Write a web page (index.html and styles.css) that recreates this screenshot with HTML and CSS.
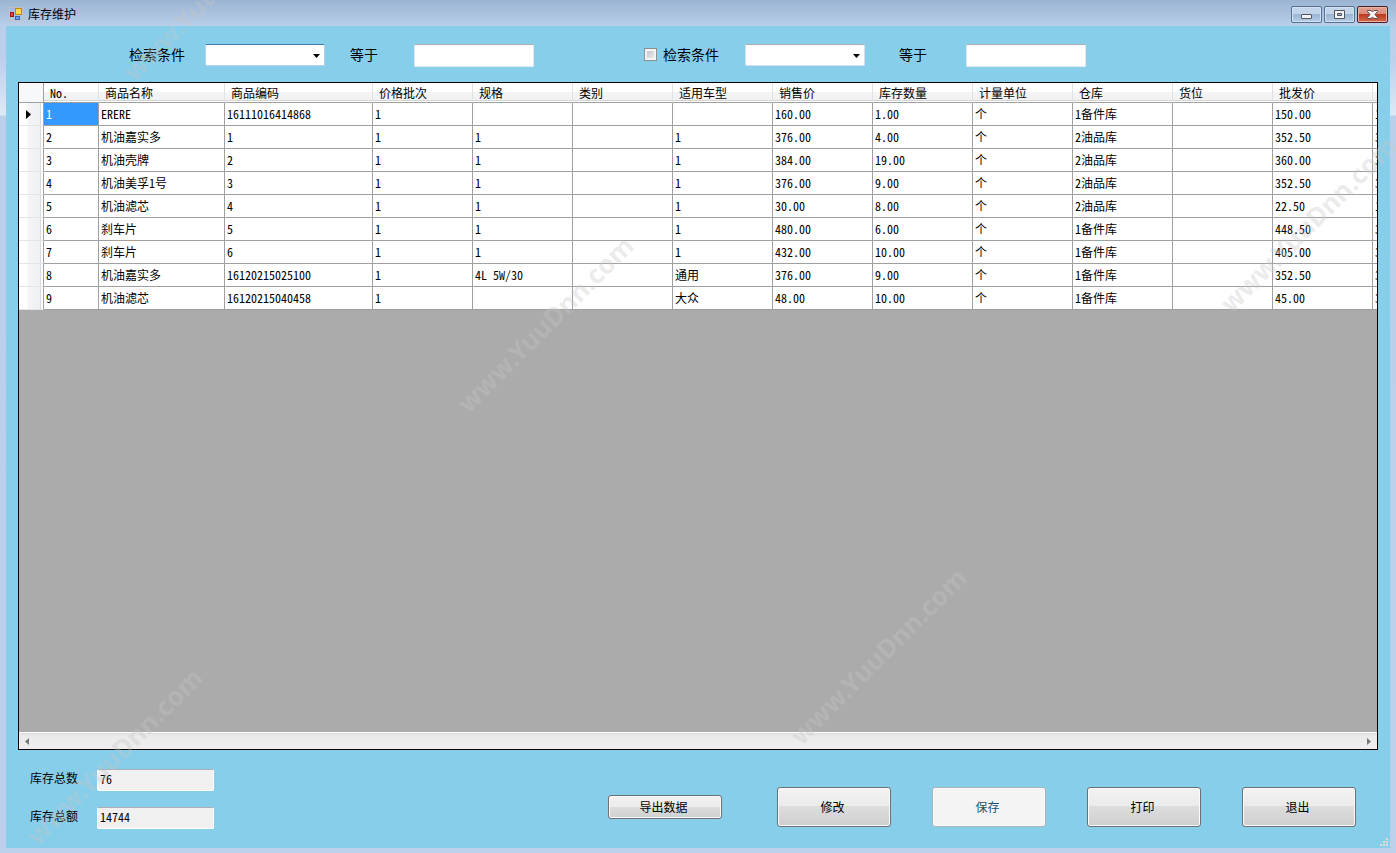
FILE: index.html
```html
<!DOCTYPE html>
<html lang="zh-CN">
<head>
<meta charset="utf-8">
<title>库存维护</title>
<link rel="stylesheet" href="styles.css">
</head>
<body>
<div class="window">
  <header class="titlebar">
    <svg class="app-icon" width="14" height="14" viewBox="0 0 14 14" aria-hidden="true">
      <rect x="0.5" y="0.5" width="13" height="13" fill="none" stroke="#c2c0c2"/>
      <rect x="6.5" y="1.5" width="6" height="6" fill="#fbd658" stroke="#c08a12"/>
      <rect x="1.5" y="5.5" width="3" height="4" fill="#dc4a33" stroke="#9b1c10"/>
      <rect x="6.5" y="9.5" width="4" height="3" fill="#6ea2ee" stroke="#3a66b8"/>
    </svg>
    <h1 class="title">库存维护</h1>
    <div class="controls">
      <button class="control" type="button" aria-label="最小化">
        <svg width="11" height="11" viewBox="0 0 11 11"><rect x="0.5" y="5.5" width="10" height="4" rx="0.5" fill="#f4f4f4" stroke="#50545c"/></svg>
      </button>
      <button class="control" type="button" aria-label="最大化">
        <svg width="11" height="11" viewBox="0 0 11 11"><path fill-rule="evenodd" d="M0.5 1.5h10v8h-10zM3.5 4.500h4v2h-4z" fill="#f4f4f4" stroke="#50545c"/></svg>
      </button>
      <button class="control control-close" type="button" aria-label="关闭">
        <svg width="11" height="11" viewBox="0 0 11 11"><path d="M0.500 1.500h3.500L5.500 3l1.500-1.500h3.500v1L8 5.500l2.500 3v1H7L5.500 8 4 9.500H0.500v-1L3 5.500l-2.500-3z" fill="#f4f4f4" stroke="#5b4a52"/></svg>
      </button>
    </div>
  </header>

  <main class="client">
    <form class="search">
      <label for="field1">检索条件</label>
      <span class="combo combo-hot">
        <select id="field1"><option></option></select>
        <svg class="arrow" width="7" height="4" viewBox="0 0 7 4"><path d="M0 0h7L3.500 4z"/></svg>
      </span>
      <label for="value1">等于</label>
      <input class="box" id="value1" type="text">
      <label class="check"><input type="checkbox">检索条件</label>
      <span class="combo">
        <select id="field2" aria-label="检索条件"><option></option></select>
        <svg class="arrow" width="7" height="4" viewBox="0 0 7 4"><path d="M0 0h7L3.500 4z"/></svg>
      </span>
      <label for="value2">等于</label>
      <input class="box" id="value2" type="text">
    </form>

    <section class="grid">
      <div class="grid-view">
        <table>
          <colgroup>
            <col class="c-head"><col class="c-no"><col class="c-name"><col class="c-code">
            <col><col><col><col><col><col><col><col><col><col><col>
          </colgroup>
          <thead>
            <tr><th></th><th>No.</th><th>商品名称</th><th>商品编码</th><th>价格批次</th><th>规格</th><th>类别</th><th>适用车型</th><th>销售价</th><th>库存数量</th><th>计量单位</th><th>仓库</th><th>货位</th><th>批发价</th><th></th></tr>
          </thead>
          <tbody>
            <tr><th><svg class="pointer" width="5" height="9" viewBox="0 0 5 9"><path d="M0 0l5 4.500L0 9z"/></svg></th><td class="selected">1</td><td>ERERE</td><td>16111016414868</td><td>1</td><td></td><td></td><td></td><td>160.00</td><td>1.00</td><td>个</td><td>1备件库</td><td></td><td>150.00</td><td>1</td></tr>
            <tr><th></th><td>2</td><td>机油嘉实多</td><td>1</td><td>1</td><td>1</td><td></td><td>1</td><td>376.00</td><td>4.00</td><td>个</td><td>2油品库</td><td></td><td>352.50</td><td>3</td></tr>
            <tr><th></th><td>3</td><td>机油壳牌</td><td>2</td><td>1</td><td>1</td><td></td><td>1</td><td>384.00</td><td>19.00</td><td>个</td><td>2油品库</td><td></td><td>360.00</td><td>3</td></tr>
            <tr><th></th><td>4</td><td>机油美孚1号</td><td>3</td><td>1</td><td>1</td><td></td><td>1</td><td>376.00</td><td>9.00</td><td>个</td><td>2油品库</td><td></td><td>352.50</td><td>3</td></tr>
            <tr><th></th><td>5</td><td>机油滤芯</td><td>4</td><td>1</td><td>1</td><td></td><td>1</td><td>30.00</td><td>8.00</td><td>个</td><td>2油品库</td><td></td><td>22.50</td><td>1</td></tr>
            <tr><th></th><td>6</td><td>刹车片</td><td>5</td><td>1</td><td>1</td><td></td><td>1</td><td>480.00</td><td>6.00</td><td>个</td><td>1备件库</td><td></td><td>448.50</td><td>3</td></tr>
            <tr><th></th><td>7</td><td>刹车片</td><td>6</td><td>1</td><td>1</td><td></td><td>1</td><td>432.00</td><td>10.00</td><td>个</td><td>1备件库</td><td></td><td>405.00</td><td>3</td></tr>
            <tr><th></th><td>8</td><td>机油嘉实多</td><td>16120215025100</td><td>1</td><td>4L 5W/30</td><td></td><td>通用</td><td>376.00</td><td>9.00</td><td>个</td><td>1备件库</td><td></td><td>352.50</td><td>3</td></tr>
            <tr><th></th><td>9</td><td>机油滤芯</td><td>16120215040458</td><td>1</td><td></td><td></td><td>大众</td><td>48.00</td><td>10.00</td><td>个</td><td>1备件库</td><td></td><td>45.00</td><td>3</td></tr>
          </tbody>
        </table>
      </div>
      <div class="scrollbar">
        <svg width="4" height="7" viewBox="0 0 4 7"><path d="M4 0v7L0 3.500z"/></svg>
        <svg width="4" height="7" viewBox="0 0 4 7"><path d="M0 0v7l4-3.500z"/></svg>
      </div>
    </section>

    <footer class="footer">
      <div class="totals">
        <label for="qty">库存总数</label><input class="box total" id="qty" type="text" value="76" readonly>
        <label for="sum">库存总额</label><input class="box total" id="sum" type="text" value="14744" readonly>
      </div>
      <div class="actions">
        <button class="btn btn-export" type="button">导出数据</button>
        <button class="btn" type="button">修改</button>
        <button class="btn" type="button" disabled>保存</button>
        <button class="btn" type="button">打印</button>
        <button class="btn" type="button">退出</button>
      </div>
    </footer>
    <svg class="grip" width="9" height="9" viewBox="0 0 9 9" fill="#e3dcd8"><path d="M6 0h2v2h-2zM3 3h2v2h-2zM6 3h2v2h-2zM0 6h2v2h-2zM3 6h2v2h-2zM6 6h2v2h-2z"/></svg>
  </main>

  <div class="marks" aria-hidden="true">
    <span class="mark m1">www.YuuDnn.com</span>
    <span class="mark m2">www.YuuDnn.com</span>
    <span class="mark m3">www.YuuDnn.com</span>
    <span class="mark m4">www.YuuDnn.com</span>
    <span class="mark m5">www.YuuDnn.com</span>
  </div>
</div>
</body>
</html>
```
FILE: styles.css
```css
* { box-sizing: border-box; }

body {
  margin: 0;
  color: #000;
  font: 12px/16px "Noto Sans Mono CJK SC", "Noto Sans CJK SC", monospace;
}

input, select, button { font: inherit; color: inherit; margin: 0; }

.window {
  position: relative;
  display: flex;
  flex-direction: column;
  min-height: 100vh;
  padding: 0 6px 5px;
  overflow: hidden;
  background: linear-gradient(#9ab4d2, #b9cfe9 26px, #bcd0ec 60px, #dde9f6 115px, #bad0ea 116px, #bcd0ec);
}

/* Title bar */
.titlebar {
  display: flex;
  align-items: center;
  height: 26px;
  padding: 2px 2px 0 3px;
}
.title { margin: 0 0 0 5px; font-size: 12px; font-weight: 400; }
.controls { display: flex; gap: 2px; margin-left: auto; }
.control {
  display: flex;
  align-items: center;
  justify-content: center;
  width: 31px;
  height: 17px;
  padding: 0;
  border: 1px solid #58708f;
  border-radius: 2px;
  background: linear-gradient(#c3d5e9 50%, #9bb5d3 50%, #b5cde6);
  box-shadow: inset 0 0 0 1px #d3e2f2;
}
.control-close {
  border-color: #4d1d27;
  background: linear-gradient(#e5a293, #d98878 50%, #bd3a20 50%, #d5684c);
  box-shadow: inset 0 0 0 1px #e9b3a6;
}

/* Client area */
.client {
  position: relative;
  display: flex;
  flex: 1;
  flex-direction: column;
  padding: 0 12px;
  background: #87ceeb;
}

.search {
  display: grid;
  grid-template-columns: 76px 145px 64px 230px 101px 154px 67px 120px;
  align-items: center;
  height: 56px;
  padding: 2px 0 0 111px;
  font-size: 14px;
}
.search label { padding-bottom: 2px; }
.box {
  width: 120px;
  height: 23px;
  padding: 0 3px;
  border: 1px solid #e3e9ef;
  border-top-color: #abadb3;
  border-radius: 2px;
  background: #fff;
}
.combo { position: relative; width: 120px; height: 22px; }
.combo select {
  display: block;
  width: 100%;
  height: 100%;
  appearance: none;
  border: 1px solid #d5dfea;
  border-top-color: #abadb3;
  border-radius: 2px;
  background: #fff;
}
.combo-hot select { border-color: #b5cfe7; border-top-color: #3d7bad; }
.arrow { position: absolute; top: 10px; right: 5px; pointer-events: none; }
.check { display: flex; align-items: center; gap: 6px; }
.check input {
  width: 13px;
  height: 13px;
  appearance: none;
  border: 1px solid #8e8f8f;
  background: linear-gradient(135deg, #b9bec8, #f2f2f2);
  box-shadow: inset 0 0 0 2px #f4f4f4;
}

/* Data grid */
.grid {
  display: flex;
  flex: 1;
  flex-direction: column;
  border: 1px solid #000;
  background: #ababab;
}
.grid-view { flex: 1; overflow: hidden; }
table {
  width: 1454px;
  table-layout: fixed;
  border-collapse: separate;
  border-spacing: 0;
}
col { width: 100px; }
.c-head { width: 25px; }
.c-no { width: 55px; }
.c-name { width: 126px; }
.c-code { width: 148px; }
th, td {
  height: 23px;
  padding: 0 2px;
  border: solid #a0a0a0;
  border-width: 0 1px 1px 0;
  background: #fff;
  font-weight: 400;
  text-align: left;
  white-space: nowrap;
}
thead th {
  height: 20px;
  padding: 0 6px;
  border-right-color: #e0e2e4;
  background: linear-gradient(#fff 45%, #f3f4f6 50%, #f1f2f4 17px, #d5d5d5 17px, #d5d5d5 18px, #fff 18px);
}
thead th:first-child { border-right-color: #a0a0a0; background: #f7f8f9; }
tbody th {
  padding: 0 0 0 7px;
  border-bottom-color: #e3e4e6;
  background: linear-gradient(90deg, #fff 8px, #f4f5f6 9px, #eff0f2 21px, #d9dadc 21px, #d9dadc 22px, #fff 22px);
}
.pointer { display: block; }
.selected { background: #3399ff; color: #fff; }

.scrollbar {
  display: flex;
  align-items: center;
  justify-content: space-between;
  height: 17px;
  padding: 0 6px;
  border-top: 1px solid #fff;
  background: linear-gradient(#dedede, #ebebeb 3px, #eee);
  fill: #777;
}

/* Footer */
.footer {
  display: flex;
  justify-content: space-between;
  height: 98px;
  padding: 19px 22px 0 12px;
}
.totals {
  display: grid;
  grid-template-columns: 67px 117px;
  grid-auto-rows: 22px;
  row-gap: 16px;
}
.totals label { line-height: 18px; }
.box.total {
  width: 117px;
  height: 22px;
  border-color: #fff;
  border-top-color: #abadb3;
  padding: 0 2px 4px;
  background: #f0f0f0;
}
.actions { display: flex; align-items: center; align-self: flex-start; gap: 41px; padding-top: 18px; }
.btn {
  width: 114px;
  height: 40px;
  padding: 0 3px 0 0;
  border: 1px solid #707070;
  border-radius: 3px;
  background: linear-gradient(#f2f2f2, #ebebeb 48%, #dddddd 48%, #cfcfcf);
  box-shadow: inset 0 0 0 1px #fbfbfb;
}
.btn-export { height: 24px; margin-right: 14px; }
.btn:disabled { border-color: #adb2b5; background: #f4f4f4; color: #175571; }
.grip { position: absolute; right: 1px; bottom: 1px; }

/* Diagonal watermark */
.marks { position: absolute; inset: 0; overflow: hidden; pointer-events: none; }
.mark {
  position: absolute;
  width: 280px;
  height: 40px;
  margin: -20px 0 0 -140px;
  color: rgba(198, 198, 198, 0.34);
  font: 700 26px/40px "Noto Sans", "Open Sans", sans-serif;
  text-align: center;
  white-space: nowrap;
  transform: rotate(-45deg);
}
.m1 { left: 211px; top: -8px; }
.m2 { left: 545px; top: 324px; }
.m3 { left: 878px; top: 656px; }
.m4 { left: 1308px; top: 224px; }
.m5 { left: 114px; top: 756px; }
```
